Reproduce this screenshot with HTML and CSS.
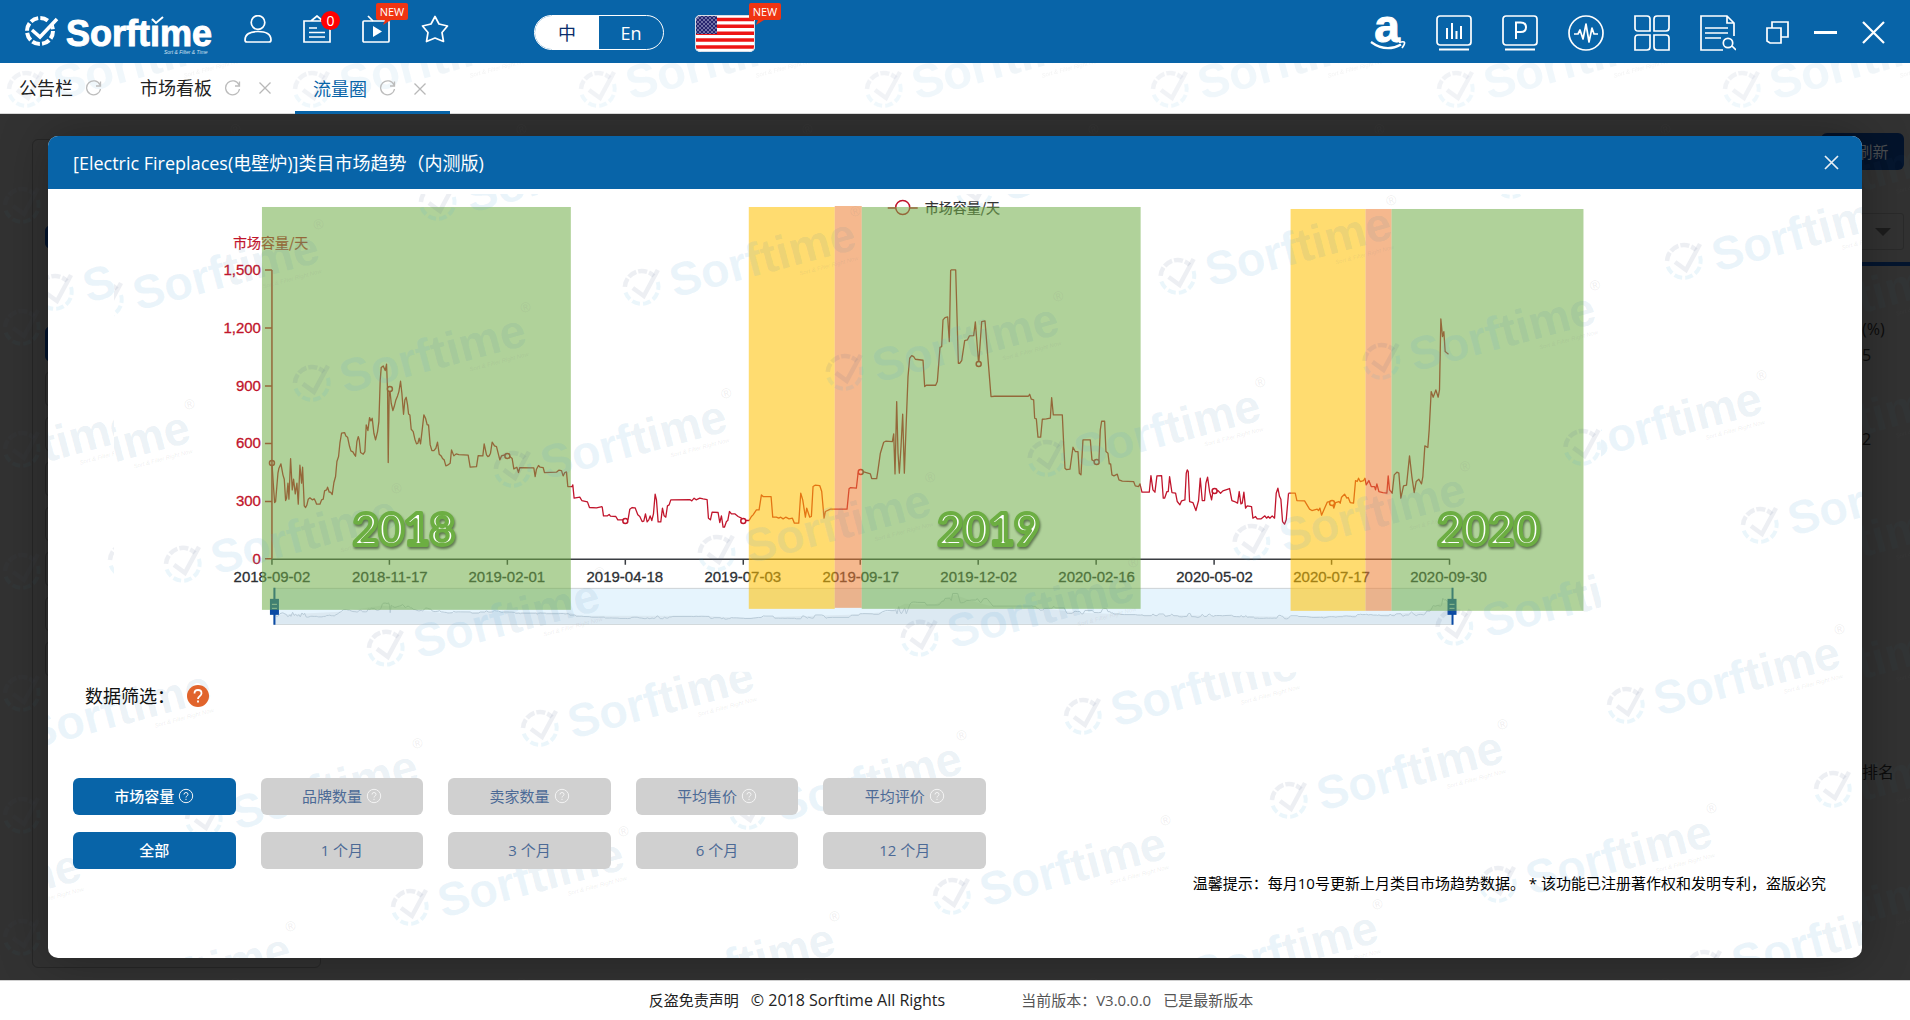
FILE: index.html
```html
<!DOCTYPE html>
<html lang="zh-CN">
<head>
<meta charset="utf-8">
<title>Sorftime - 流量圈</title>
<link rel="stylesheet" href="styles.css">
</head>
<body>
<svg class="sprite" aria-hidden="true">
  <defs>
    <symbol id="wm" overflow="visible">
      <g fill="none">
        <path d="M-17 -1A17 17 0 0 1 12 -12" stroke="#5a6a96" stroke-opacity=".11" stroke-width="4.500" stroke-dasharray="9 2"/>
        <path d="M16 -6A17 17 0 1 1 -17 2" stroke="#4ab0dc" stroke-opacity=".11" stroke-width="4" stroke-dasharray="8 3"/>
        <path d="M-9 0L2 8L16 -18" stroke="#5a6a96" stroke-opacity=".11" stroke-width="4.500"/>
      </g>
      <g transform="rotate(-15)">
        <text x="29" y="18" class="wm-text"><tspan fill="#58a8d8" fill-opacity=".12">Sorf</tspan><tspan fill="#4886ac" fill-opacity=".11">time</tspan></text>
        <text x="156" y="29" class="wm-sub">Sort &amp; Filter Right Now</text>
        <text x="221" y="-14" class="wm-reg">®</text>
      </g>
    </symbol>
    <pattern id="wm-tabs" width="286" height="160" patternUnits="userSpaceOnUse" x="0" y="-50">
      <use href="#wm" x="26" y="77"/>
    </pattern>
    <pattern id="wm-page" width="286" height="122" patternUnits="userSpaceOnUse">
      <use href="#wm" x="22" y="92"/>
    </pattern>
    <symbol id="i-refresh" viewBox="0 0 17 17"><path d="M15 5A7 7 0 1 0 15.500 9M15.500 1.500V6H11" fill="none" stroke="#bcbcbc" stroke-width="1.300"/></symbol>
    <symbol id="i-close" viewBox="0 0 14 14"><path d="M1.500 1.500L12.500 12.500M12.500 1.500L1.500 12.500" fill="none" stroke="currentColor" stroke-width="1.300"/></symbol>
    <symbol id="i-help" viewBox="0 0 16 16"><circle cx="8" cy="8" r="6.700" fill="none" stroke="currentColor"/><path d="M6 6.500Q6 4.500 8 4.500T10 6.400Q10 7.300 9 7.900T8 9.500M8 10.800V12" fill="none" stroke="currentColor"/></symbol>
    <symbol id="i-new" viewBox="0 0 32 23"><path d="M2 0H30Q32 0 32 2V15Q32 17 30 17H15L7 22L9 17H2Q0 17 0 15V2Q0 0 2 0Z" fill="#f03412"/><text x="16" y="13" text-anchor="middle" class="new-text">NEW</text></symbol>
  </defs>
</svg>

<header class="topbar">
  <a href="#" class="brand" aria-label="Sorftime">
    <svg viewBox="0 0 190 42" width="190" height="42">
      <circle cx="15" cy="18" r="13" fill="none" stroke="#fff" stroke-width="4" stroke-dasharray="8 2.200"/>
      <path d="M18 12L30 4L27 14Z" fill="#0864a8"/>
      <path d="M7 17L15 24L32 6" fill="none" stroke="#fff" stroke-width="3.500"/>
      <text x="41" y="33" class="brand-text">Sorftime</text>
      <path d="M127 5H138V11H127Z" fill="#0864a8"/>
      <path d="M127 6L131 10L138 4" fill="none" stroke="#fff" stroke-width="2"/>
      <text x="139" y="41" class="brand-sub">Sort &amp; Filter &amp; Time</text>
    </svg>
  </a>
  <nav class="quick">
    <button class="icon" aria-label="用户"><svg viewBox="0 0 28 28"><circle cx="14" cy="7.500" r="6.800"/><path d="M1 25C1 19 6 16.500 14 16.500S27 19 27 25Q27 27 25 27H3Q1 27 1 25Z"/></svg></button>
    <button class="icon" aria-label="公告"><svg viewBox="0 0 28 28"><path d="M1 6H27V27H1ZM8 6L14 1L20 6M6 13H14M6 17.500H22M6 22H22"/></svg><span class="count">0</span></button>
    <button class="icon" aria-label="视频"><svg viewBox="0 0 28 28"><rect x="1" y="6" width="26" height="21" rx="1"/><path d="M11 6L6 1"/><path d="M11 11V22L20 16.500Z" fill="#fff" stroke="none"/></svg><svg class="new"><use href="#i-new"/></svg></button>
    <button class="icon" aria-label="收藏"><svg viewBox="0 0 28 28"><path stroke-linejoin="round" d="M14 1.500L18 9L26.500 11L21 17.500L22.500 26.500L14 23L5.500 26.500L7 17.500L1.500 11L10 9Z"/></svg></button>
  </nav>
  <div class="lang"><button class="on">中</button><button>En</button></div>
  <button class="flag" aria-label="美国站">
    <svg viewBox="0 0 60 37" width="60" height="37">
      <defs><clipPath id="flagclip"><rect width="60" height="37" rx="5"/></clipPath><pattern id="stars" width="4" height="4" patternUnits="userSpaceOnUse"><rect width="4" height="4" fill="#26246e"/><circle cx="1" cy="1" r=".8" fill="#cfd0ea"/><circle cx="3" cy="3" r=".8" fill="#cfd0ea"/></pattern></defs>
      <g clip-path="url(#flagclip)"><rect width="60" height="37" fill="#fff"/>
      <path d="M1 4.500H59M1 11.300H59M1 18.200H59M1 25H59M1 32H59" stroke="#ee1414" stroke-width="3.500"/>
      <rect x="1" y="1" width="21" height="18" fill="url(#stars)"/></g>
      <rect x=".5" y=".5" width="59" height="36" rx="5" fill="none" stroke="#d8dde6"/>
    </svg>
    <svg class="new"><use href="#i-new"/></svg>
  </button>
  <nav class="tools">
    <button class="tool" aria-label="Amazon"><svg viewBox="0 0 36 36"><text x="17" y="27" text-anchor="middle" class="amz">a</text><path d="M1 27Q16 38 31 29.500" stroke-width="2.200"/><path d="M29 27.500Q34 26 34.500 27.500T32 33"/></svg></button>
    <button class="tool" aria-label="数据"><svg viewBox="0 0 36 36"><rect x="1" y="1" width="34" height="29" rx="3"/><path d="M3 34.500H33M11 13V24M16 8V24M20.500 16V24M25 11V24" stroke-width="2"/></svg></button>
    <button class="tool" aria-label="产品"><svg viewBox="0 0 36 36"><rect x="1" y="1" width="34" height="29" rx="3"/><path d="M3 34.500H33M14 24V7.500H18.500Q24 7.500 24 12.300T18.500 17H14" stroke-width="2"/></svg></button>
    <button class="tool" aria-label="监控"><svg viewBox="0 0 36 36"><circle cx="18" cy="18" r="17"/><path stroke-linejoin="round" d="M6 19H10L12 15L15 24L18 9L21 27L24 13L26 19H30"/></svg></button>
    <button class="tool" aria-label="应用"><svg viewBox="0 0 36 36"><path d="M1 1H13Q16 1 16 4V16H4Q1 16 1 13ZM35 1H23Q20 1 20 4V16H32Q35 16 35 13ZM1 35H13Q16 35 16 32V20H4Q1 20 1 23ZM35 35H23Q20 35 20 32V20H32Q35 20 35 23Z"/></svg></button>
    <button class="tool" aria-label="查询"><svg viewBox="0 0 36 36"><path d="M23 35H1V1H27L34 8V21M27 1V8H34M5 13H28M5 18H28M5 23H21M32 31L36 35"/><circle cx="28" cy="28" r="4.700"/></svg></button>
    <button class="win" aria-label="还原"><svg viewBox="0 0 23 23"><path d="M1 7H15V22H4L1 20ZM6 7V1H22V16H15"/></svg></button>
    <button class="win" aria-label="最小化"><svg viewBox="0 0 23 23"><path d="M0 11.500H23" stroke-width="3"/></svg></button>
    <button class="win" aria-label="关闭"><svg viewBox="0 0 23 23"><path d="M1 1L22 22M22 1L1 22" stroke-width="2.200"/></svg></button>
  </nav>
</header>

<nav class="tabs">
  <svg class="tabs-bg" aria-hidden="true"><rect width="100%" height="100%" fill="url(#wm-tabs)"/></svg>
  <div class="tab"><a href="#">公告栏</a><svg class="re"><use href="#i-refresh"/></svg></div>
  <div class="tab"><a href="#">市场看板</a><svg class="re"><use href="#i-refresh"/></svg><svg class="x"><use href="#i-close"/></svg></div>
  <div class="tab active"><a href="#">流量圈</a><svg class="re"><use href="#i-refresh"/></svg><svg class="x"><use href="#i-close"/></svg></div>
</nav>

<main class="stage">
  <svg class="stage-bg" aria-hidden="true"><rect width="100%" height="100%" fill="url(#wm-page)"/></svg>
  <div class="page">
    <aside class="filters"><i class="mark blue short"></i><i class="mark blue"></i><i class="mark"></i><i class="mark"></i><i class="mark"></i><i class="mark"></i><i class="mark"></i><i class="mark"></i><i class="mark"></i></aside>
    <section class="panel">
      <button class="reload">刷新</button>
      <div class="drop"><i></i></div>
      <div class="rule"></div>
      <p class="p1">(%)</p>
      <p class="p2">5</p>
      <p class="p3">2</p>
      <p class="p4">排名</p>
    </section>
  </div>

  <section class="modal" role="dialog" aria-labelledby="title">
    <header class="modal-head"><h1 id="title">[Electric Fireplaces(电壁炉)]类目市场趋势（内测版)</h1><button class="close" aria-label="关闭"><svg width="15" height="15" viewBox="0 0 15 15"><path d="M1 1L14 14M14 1L1 14" stroke="#e8eef4" stroke-width="1.700"/></svg></button></header>
    <div class="modal-body">
      <svg class="body-wm" aria-hidden="true">
        <g transform="translate(-48 -189)">
          <use href="#wm" x="55" y="293"/><use href="#wm" x="-78" y="477"/><use href="#wm" x="127" y="561"/><use href="#wm" x="1684" y="262"/><use href="#wm" x="1548" y="452"/><use href="#wm" x="1760" y="526"/>
          <use href="#wm" x="-3" y="740"/><use href="#wm" x="540" y="729"/><use href="#wm" x="1083" y="717"/><use href="#wm" x="1626" y="706"/>
          <use href="#wm" x="204" y="820"/><use href="#wm" x="748" y="812"/><use href="#wm" x="1289" y="801"/><use href="#wm" x="1833" y="790"/>
          <use href="#wm" x="-133" y="919"/><use href="#wm" x="410" y="908"/><use href="#wm" x="952" y="897"/><use href="#wm" x="1498" y="885"/>
          <use href="#wm" x="77" y="1003"/><use href="#wm" x="621" y="993"/><use href="#wm" x="1164" y="981"/><use href="#wm" x="1704" y="969"/>
        </g>
      </svg>
      <svg class="chart" viewBox="114 194 1488 478" role="img" aria-label="市场容量/天">
        <rect x="114" y="194" width="1488" height="478" fill="#fff"/>
        <g class="slider">
          <rect x="274" y="588.500" width="1179" height="36" fill="#e6f4fd" stroke="#ccd2d6"/>
          <path fill="#dce9f2" d="M274 624V615L300 614L340 612L380 606L400 607L440 613L500 612L570 613L580 616L700 616L740 618L850 615L890 612L905 604L935 605L955 595L975 602L990 606L1030 607L1080 613L1140 615L1220 616L1290 617L1380 615L1425 612L1440 604L1449 602L1453 624Z"/>
        </g>
        <g id="series" class="series" fill="none">
          <g transform="translate(200 190) scale(.3333)"><polyline vector-effect="non-scaling-stroke" points="216,818 220,880 224,938 227,935 234,850 237,835 243,822 249,855 253,868 257,932 260,925 264,880 267,928 272,806 277,900 281,868 286,912 291,880 295,943 300,826 305,880 308,832 313,948 317,953 321,945 325,928 330,924 337,930 343,927 347,935 350,943 360,943 365,930 370,928 374,903 380,900 383,892 388,907 392,907 397,914 402,878 407,860 411,815 416,800 420,760 425,730 434,728 438,738 443,742 449,770 453,783 459,786 464,795 467,799 471,755 475,740 478,750 482,788 490,793 495,785 499,705 504,722 509,683 513,693 517,685 522,730 527,750 533,725 537,695 541,570 544,533 550,528 556,542 560,523 563,600 565,818 568,600 570,600 574,640 579,662 583,650 588,630 593,618 597,605 602,574 606,610 611,673 615,630 619,622 623,645 626,672 630,675 634,718 640,725 645,748 650,762 654,760 658,745 662,762 667,720 672,675 677,685 682,705 686,705 691,765 696,782 702,782 708,775 713,757 718,793 724,798 728,806 733,810 738,828 743,826 751,820 755,780 762,798 769,792 777,794 805,796 811,832 830,830 835,797 849,798 853,762 860,795 864,800 868,798 872,790 877,757 884,768 890,770 900,810 905,798 915,795 923,798 930,800 937,806 942,837 951,832 956,848 960,833 1002,834 1006,860 1010,838 1016,827 1021,832 1030,833 1034,848 1070,847 1077,841 1085,842 1090,858 1095,848 1100,846 1104,890 1117,890 1119,885 1123,925 1140,922 1146,932 1163,936 1169,953 1190,954 1207,950"/></g>
          <g transform="translate(560 190) scale(.3333)"><polyline vector-effect="non-scaling-stroke" points="127,950 131,978 143,978 148,974 152,979 168,980 174,990 190,990 197,993 205,988 210,958 217,953 226,954 234,975 240,980 247,995 252,994 257,972 262,996 267,990 271,978 276,992 281,972 286,913 290,930 295,996 303,996 308,955 313,978 318,982 323,948 328,945 333,930 390,929 396,933 403,925 409,930 420,925 430,927 442,929 446,985 452,990 457,967 475,968 480,998 485,978 490,1012 494,1012 500,995 504,992 509,965 515,972 525,972 535,980 545,985 550,992 568,992 575,980 580,975 590,960 598,960 605,915 610,920 634,920 639,982 650,982 657,985 663,982 670,987 678,982 688,987 698,985 704,1000 717,1000 723,910 729,930 737,982 741,955 750,982 755,980 760,890 766,886 780,887 786,905 793,985 797,965 812,958 862,958 868,897 873,893 890,895 895,850 903,846 910,845 932,852 936,866 951,866 955,840 962,790 972,757 978,754 998,755 1002,732 1006,852 1011,635 1015,790 1019,850 1024,770 1029,673 1034,850 1040,690 1045,560 1050,505 1056,497 1062,500 1067,508 1090,511 1095,590 1100,586 1128,586 1133,575 1141,472 1146,470 1150,390 1156,383 1164,381 1169,455 1173,240"/></g>
          <g transform="translate(900 190) scale(.3333)"><polyline vector-effect="non-scaling-stroke" points="153,240 168,240 176,520 180,520 186,512 195,452 203,450 209,438 222,437 227,396 237,523 246,395 256,393 262,470 268,545 274,620 285,619 386,619 390,613 395,628 402,630 405,685 410,687 415,742 423,742 428,688 440,687 452,685 456,623 461,675 488,675 492,760 496,835 500,839 511,838 520,772 527,785 535,785 539,850 544,855 550,750 572,750 577,810 590,817 598,810 602,720 606,694 615,694 619,785 625,790 629,822 633,822 637,855 643,858 653,853 658,870 668,874 702,875 707,888 717,890 721,882 727,907 749,907 754,857 760,900 766,907 772,858 786,857 791,925 795,925 802,905 806,905 810,860 817,908 828,910 833,935 841,945 846,933 856,930 860,850 863,840 866,845 870,935 880,938 889,962 897,932 902,865 908,932 915,932 919,880 924,862 930,905 936,930 940,905 945,903 955,902 963,910 970,903 990,896 997,932 1005,935 1014,940 1019,905 1024,942 1028,940 1033,907 1038,955 1043,948 1056,950 1060,985 1068,980 1073,987 1085,987 1096,978 1101,985 1106,980 1111,985 1118,978 1125,985 1130,910 1135,895 1140,920 1144,928 1149,995 1155,1003 1160,990 1167,910"/></g>
          <g transform="translate(1260 190) scale(.3333)"><polyline vector-effect="non-scaling-stroke" points="87,910 107,910 112,932 135,933 150,958 157,962 173,958 177,962 181,955 186,976 203,937 210,935 218,940 223,955 228,938 238,935 242,940 246,922 255,913 262,925 266,923 272,938 282,940 288,872 293,875 297,865 302,875 312,872 316,865 320,885 328,872 335,890 345,890 348,900 352,882 358,905 370,908 382,910 386,858 390,900 398,910 404,855 412,847 418,850 424,925 432,888 441,886 450,798 457,860 464,908 470,875 478,868 486,882 490,860 496,768 505,773 509,720 515,605 521,622 529,600 536,622 540,600 544,387 549,440 553,425 557,485 567,493"/></g>
        </g>
        <g class="mini"><use href="#series" transform="matrix(1 0 0 .1 2 566.600)"/></g>
        <use href="#series" stroke="#c1152c" stroke-width="1.300"/>
        <g class="dots"><circle cx="272" cy="463" r="2.500"/><circle cx="390" cy="389" r="2.500"/><circle cx="507.500" cy="456" r="2.500"/><circle cx="625.500" cy="521" r="2.500"/><circle cx="743.500" cy="521" r="2.500"/><circle cx="861" cy="472" r="2.500"/><circle cx="979" cy="364" r="2.500"/><circle cx="1097" cy="462" r="2.500"/><circle cx="1215" cy="491" r="2.500"/><circle cx="1332.500" cy="503" r="2.500"/></g>
        <g class="legend"><path d="M888 208H896M910 208H918"/><circle cx="903" cy="207.500" r="7"/><text x="925" y="213">市场容量/天</text></g>
        <path d="M272 270V559M265 270H272M265 328H272M265 386H272M265 443.500H272M265 501.500H272M265 559H272" stroke="#c1152c" stroke-width="1.500" fill="none"/>
        <path d="M272 559.500H1450M272 559V565M389.500 559V565M507.500 559V565M625.500 559V565M743.500 559V565M860.500 559V565M978.500 559V565M1096.500 559V565M1214.500 559V565M1332 559V565M1450 559V565" stroke="#3a3d42" stroke-width="1.500" fill="none"/>
        <text class="ytitle" x="233" y="248">市场容量/天</text>
        <g class="ylab"><text x="261" y="275">1,500</text><text x="261" y="333">1,200</text><text x="261" y="391">900</text><text x="261" y="448">600</text><text x="261" y="506">300</text><text x="261" y="564">0</text></g>
        <g class="xlab"><text x="272" y="582">2018-09-02</text><text x="390" y="582">2018-11-17</text><text x="507" y="582">2019-02-01</text><text x="625" y="582">2019-04-18</text><text x="743" y="582">2019-07-03</text><text x="861" y="582">2019-09-17</text><text x="979" y="582">2019-12-02</text><text x="1097" y="582">2020-02-16</text><text x="1215" y="582">2020-05-02</text><text x="1332" y="582">2020-07-17</text><text x="1449" y="582">2020-09-30</text></g>
        <g class="handles"><path d="M274.500 588V625M1453 588V625"/><rect x="270" y="599" width="9" height="16"/><rect x="1448" y="599" width="9" height="16"/><path class="grip" d="M272 604.500H277M272 608.500H277M1450 604.500H1455M1450 608.500H1455"/></g>
        <g>
          <rect class="green" x="262" y="207" width="309" height="403"/>
          <rect class="yellow" x="749" y="207" width="86" height="402"/><rect class="orange" x="835" y="206" width="27" height="402"/><rect class="green" x="862" y="207" width="279" height="402"/>
          <rect class="yellow" x="1291" y="209" width="75" height="402"/><rect class="orange" x="1366" y="209" width="26" height="402"/><rect class="green" x="1392" y="209" width="192" height="402"/>
        </g>
        <g>
          <use href="#wm" x="105" y="301"/><use href="#wm" x="642" y="288"/><use href="#wm" x="1178" y="277"/>
          <use href="#wm" x="438" y="203"/><use href="#wm" x="975" y="191"/><use href="#wm" x="1512" y="181"/>
          <use href="#wm" x="312" y="384"/><use href="#wm" x="845" y="373"/><use href="#wm" x="1382" y="362"/>
          <use href="#wm" x="-24" y="481"/><use href="#wm" x="513" y="470"/><use href="#wm" x="1047" y="459"/><use href="#wm" x="1583" y="448"/>
          <use href="#wm" x="183" y="565"/><use href="#wm" x="717" y="554"/><use href="#wm" x="1252" y="543"/>
          <use href="#wm" x="386" y="649"/><use href="#wm" x="920" y="639"/><use href="#wm" x="1455" y="628"/>
        </g>
        <g class="years"><text x="404" y="545">2018</text><text x="989" y="545">2019</text><text x="1489" y="545">2020</text></g>
      </svg>

      <div class="filter-head">数据筛选：<svg width="22" height="22" viewBox="0 0 22 22"><circle cx="11" cy="11" r="11" fill="#e1642c"/><path d="M7.500 8.500Q7.500 5 11 5T14.500 8.300Q14.500 10 12.700 11.200T11 14M11 15.500V17.500" fill="none" stroke="#fff" stroke-width="1.800"/></svg></div>
      <div class="options">
        <button class="opt on">市场容量<svg><use href="#i-help"/></svg></button>
        <button class="opt">品牌数量<svg><use href="#i-help"/></svg></button>
        <button class="opt">卖家数量<svg><use href="#i-help"/></svg></button>
        <button class="opt">平均售价<svg><use href="#i-help"/></svg></button>
        <button class="opt">平均评价<svg><use href="#i-help"/></svg></button>
        <button class="opt on">全部</button>
        <button class="opt">1 个月</button>
        <button class="opt">3 个月</button>
        <button class="opt">6 个月</button>
        <button class="opt">12 个月</button>
      </div>
      <p class="note">温馨提示：每月10号更新上月类目市场趋势数据。 * 该功能已注册著作权和发明专利，盗版必究</p>
    </div>
  </section>
</main>

<footer class="foot">
  <span><a href="#">反盗免责声明</a><span class="copy">© 2018 Sorftime All Rights</span></span>
  <span class="ver"><span>当前版本：V3.0.0.0</span><span>已是最新版本</span></span>
</footer>
</body>
</html>
```
FILE: styles.css
```css
* { box-sizing: border-box; }
html { height: 100%; }
body {
  margin: 0;
  min-height: 100%;
  display: flex;
  flex-direction: column;
  overflow-x: hidden;
  font: 15px/20px "Open Sans", "Noto Sans CJK SC", sans-serif;
  color: #222;
  background: #fff;
}
button { font: inherit; color: inherit; background: none; border: 0; padding: 0; }
a { color: inherit; text-decoration: none; }
.sprite { position: absolute; width: 0; height: 0; }
.wm-text { font: bold 47px "Liberation Sans", sans-serif; }
.wm-sub { font: italic 6px "Liberation Sans", sans-serif; fill: #888; fill-opacity: .14; }
.wm-reg { font: 14px "Liberation Sans", sans-serif; fill: #888; fill-opacity: .14; }
.new-text { font: 11px "Open Sans", sans-serif; fill: #fff; }

/* top bar */
.topbar { display: flex; align-items: flex-start; height: 63px; padding: 15px 25px 0; background: #0864a8; color: #fff; }
.brand { width: 190px; height: 42px; margin-top: -2px; }
.brand-text { font: bold 36px "Liberation Sans", sans-serif; fill: #fff; stroke: #fff; stroke-width: 1px; }
.brand-sub { font: italic 5px "Liberation Sans", sans-serif; fill: #cfe2f2; }
.quick { display: flex; gap: 31px; margin-left: 29px; }
.icon { position: relative; width: 28px; height: 28px; }
.icon > svg:first-child { width: 28px; height: 28px; fill: none; stroke: #fff; stroke-width: 1.7px; display: block; }
.count { position: absolute; left: 18px; top: -4px; width: 19px; height: 19px; border-radius: 10px; background: #f00; font-size: 14px; line-height: 19px; text-align: center; }
.new { position: absolute; left: 14px; top: -12px; width: 32px; height: 23px; }
.lang { display: flex; width: 130px; height: 35px; margin-left: 85px; border: 1px solid #fff; border-radius: 18px; overflow: hidden; font-size: 18px; }
.lang button { flex: 1; }
.lang .on { background: #fff; color: #0a2d6c; }
.flag { position: relative; width: 60px; height: 37px; margin-left: 31px; }
.flag svg { display: block; }
.flag .new { left: 54px; }
.tools { display: flex; align-items: flex-start; gap: 30px; margin-left: auto; }
.tool { width: 36px; height: 36px; }
.tools svg { display: block; width: 100%; height: 100%; fill: none; stroke: #fff; stroke-width: 1.7px; }
.amz { font: bold 46px "Liberation Sans", sans-serif; fill: #fff; stroke: #fff; stroke-width: 1px; }
.win { width: 23px; height: 23px; margin-top: 6px; }
.win + .win { margin-left: -5px; }

/* tabs */
.tabs { position: relative; display: flex; height: 51px; padding-left: 1px; border-bottom: 1px solid #d8d8d8; font-size: 18px; }
.tabs-bg { position: absolute; inset: 0; width: 100%; height: 100%; opacity: .75; }
.tab { position: relative; display: flex; align-items: center; padding: 0 23px 0 18px; color: #b8b8b8; }
.tab:nth-of-type(1) { padding-right: 20px; }
.tab a { color: #222; }
.tab .re { width: 17px; height: 17px; margin-left: 12px; }
.tab .x { width: 14px; height: 14px; margin-left: 17px; }
.tab.active { border-bottom: 3px solid #0864a8; padding-top: 3px; margin-bottom: -1px; }
.tab.active a { color: #0864a8; }

/* dimmed page below the dialog */
.stage { flex: 1; display: grid; position: relative; background: #323232; overflow: hidden; }
.stage-bg { position: absolute; inset: 0; width: 100%; height: 100%; opacity: .3; }
.page, .modal { grid-area: 1 / 1; min-width: 0; }
.page { display: flex; justify-content: space-between; color: #0c0c0c; font-size: 16px; }
.filters { width: 289px; margin: 25px 0 12px 32px; padding: 85px 0 0 12px; border: 1px solid #272727; border-radius: 6px; display: flex; flex-direction: column; gap: 9px; }
.mark { height: 36px; border: 1px solid #262626; border-radius: 6px; margin-right: 12px; }
.mark.blue { background: #03132c; border-color: #03132c; }
.mark.short { height: 24px; margin-bottom: 68px; }
.panel { width: 83px; margin: 19px 6px 0 0; }
.panel p { margin: 0 0 0 41px; white-space: nowrap; }
.reload { width: 100%; height: 37px; padding-left: 20px; border-radius: 6px; background: #03132b; color: #4a4d50; }
.drop { height: 37px; margin-top: 43px; border: 1px solid #2a2a2a; border-radius: 3px; display: flex; align-items: center; justify-content: flex-end; padding-right: 12px; }
.drop i { border: 8px solid transparent; border-top-color: #1c1c1c; border-bottom: 0; }
.rule { height: 4px; margin: 12px -6px 0 0; background: #04152e; }
.panel .p1 { margin-top: 53px; }
.panel .p2 { margin-top: 6px; }
.panel .p3 { margin-top: 64px; }
.panel .p4 { margin-top: 313px; }

/* dialog */
.modal { position: relative; margin: 22px 48px; display: flex; flex-direction: column; border-radius: 10px; background: #fff; overflow: hidden; box-shadow: 0 0 50px rgba(0, 0, 0, .3); }
.modal-head { display: flex; align-items: center; justify-content: space-between; height: 53px; padding: 0 23px 0 25px; background: #0864a8; color: #fff; }
.modal-head h1 { margin: 0; font-size: 18px; font-weight: 400; }
.close { width: 15px; height: 15px; }
.close svg { display: block; }
.modal-body { position: relative; flex: 1; overflow: hidden; }
.body-wm { position: absolute; inset: 0; width: 100%; height: 100%; }
.chart { position: relative; display: block; width: 82%; height: auto; margin: 5px 66px 0; }
.series { stroke-linejoin: round; }
.mini { stroke: #b9cbd8; stroke-width: 1px; }
.dots circle, .legend circle { fill: #fff; stroke: #c1152c; stroke-width: 1.5px; }
.legend path { stroke: #c1152c; stroke-width: 1.5px; }
.legend text, .ytitle { font: 14px "Noto Sans CJK SC", sans-serif; fill: #333; stroke: #333; stroke-width: .2px; }
.ytitle { fill: #c1152c; stroke: #c1152c; }
.ylab, .xlab { font: 15px "Liberation Sans", sans-serif; fill: #2c2f33; stroke: #2c2f33; stroke-width: .3px; text-anchor: middle; }
.ylab { fill: #c1152c; stroke: #c1152c; text-anchor: end; }
.handles { fill: #0a4aa4; stroke: none; }
.handles path { stroke: #0a4aa4; stroke-width: 2px; }
.handles .grip { stroke: #b9cfe6; stroke-width: 1px; }
.green { fill: #70ad47; fill-opacity: .55; }
.yellow { fill: #ffc000; fill-opacity: .56; }
.orange { fill: #ed7d31; fill-opacity: .55; }
.years { font: bold 44px Lato, sans-serif; text-anchor: middle; fill: #fff; stroke: #6cae42; stroke-width: 4px; stroke-linejoin: round; filter: drop-shadow(1px 2px 1px rgba(60, 80, 50, .7)); }

.filter-head { position: relative; display: flex; align-items: center; gap: 12px; margin: 12px 37px 0; font-size: 18px; line-height: 24px; color: #111; }
.options { position: relative; display: grid; grid-template-columns: repeat(5, 1fr); gap: 17px 25px; max-width: 913px; margin: 70px 25px 0; }
.opt { display: flex; align-items: center; justify-content: center; gap: 4px; height: 37px; border-radius: 6px; background: #d0d0d0; color: #4c6a96; }
.opt svg { width: 16px; height: 16px; color: #f4f4f4; }
.opt.on { background: #0864a8; color: #fff; font-weight: 500; }
.note { position: relative; margin: 4px 36px 0; text-align: right; color: #000; }

.foot { display: flex; justify-content: center; gap: 76px; height: 40px; padding: 9px 8px 0 0; border-top: 1px solid #d0d0d0; background: #fff; }
.foot > span { display: flex; gap: 12px; }
.copy { font-size: 16px; }
.ver { color: #555; }
```
